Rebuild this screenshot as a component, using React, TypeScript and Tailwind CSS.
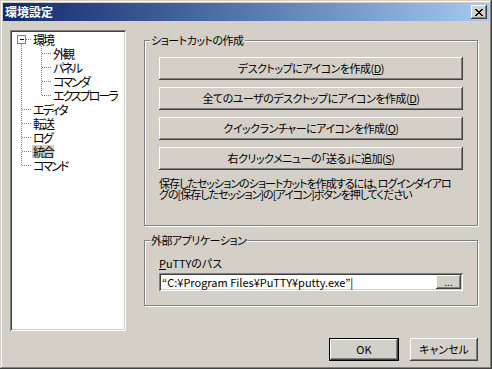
import React from "react";

const raised =
  "shadow-[inset_-1px_-1px_#404040,inset_1px_1px_#ffffff,inset_-2px_-2px_#808080,inset_2px_2px_#d4d0c8]";
const sunken =
  "shadow-[inset_1px_1px_#808080,inset_-1px_-1px_#ffffff,inset_2px_2px_#404040,inset_-2px_-2px_#d4d0c8]";

function Btn({ children, w, def }: { children: React.ReactNode; w: string; def?: boolean }) {
  if (def) {
    return (
      <div className={`${w} h-[23px] border border-black bg-[#d4d0c8]`}>
        <div className={`w-full h-full flex items-center justify-center ${raised}`}>{children}</div>
      </div>
    );
  }
  return (
    <div className={`${w} h-[23px] bg-[#d4d0c8] flex items-center justify-center ${raised}`}>{children}</div>
  );
}

function Group({ label, h, children }: { label: string; h: string; children: React.ReactNode }) {
  return (
    <div className={`relative w-[334px] ${h} border border-[#808080] shadow-[1px_1px_0_#ffffff,inset_1px_1px_0_#ffffff]`}>
      <div className="absolute left-[5px] top-[-7px] bg-[#d4d0c8] px-[1px] leading-[13px] tracking-[-0.5px] whitespace-nowrap">
        {label}
      </div>
      {children}
    </div>
  );
}

const treeRows: { text: string; child?: boolean; sel?: boolean }[] = [
  { text: "環境" },
  { text: "外観", child: true },
  { text: "パネル", child: true },
  { text: "コマンダ", child: true },
  { text: "エクスプローラ", child: true },
  { text: "エディタ" },
  { text: "転送" },
  { text: "ログ" },
  { text: "統合", sel: true },
  { text: "コマンド" },
];

function Tree() {
  const cy = (k: number) => 9 + 14 * k + 0.5;
  return (
    <div className={`relative w-[116px] h-[301px] bg-white ${sunken}`}>
      <svg className="absolute left-0 top-0" width="116" height="301" shapeRendering="crispEdges">
        <g stroke="#808080" strokeWidth="1" strokeDasharray="1 1" fill="none">
          <line x1="11.5" y1="14" x2="11.5" y2={cy(9) + 0.5} />
          <line x1="16" y1={cy(0)} x2="21" y2={cy(0)} />
          {[5, 6, 7, 8, 9].map((k) => (
            <line key={k} x1="12" y1={cy(k)} x2="21" y2={cy(k)} />
          ))}
          <line x1="31.5" y1="16" x2="31.5" y2={cy(4) + 0.5} />
          {[1, 2, 3, 4].map((k) => (
            <line key={k} x1="32" y1={cy(k)} x2="41" y2={cy(k)} />
          ))}
        </g>
        <rect x="7.5" y="5.5" width="8" height="8" fill="#ffffff" stroke="#808080" />
        <line x1="9.5" y1="9.5" x2="14" y2="9.5" stroke="#000000" />
      </svg>
      <div className="relative flex flex-col pt-[2px]">
        {treeRows.map((r, i) => (
          <div key={i} className={`h-[14px] flex items-center ${r.child ? "pl-[42px]" : "pl-[22px]"}`}>
            <span
              className={`px-[1px] text-[12px] leading-[13px] tracking-[-2px] whitespace-nowrap ${r.sel ? "bg-[#d4d0c8]" : ""}`}
            >
              {r.text}
            </span>
          </div>
        ))}
      </div>
    </div>
  );
}

export default function App() {
  return (
    <div
      className={`w-[492px] h-[369px] bg-[#d4d0c8] p-[3px] text-[11px] text-black [font-family:'Noto_Sans_CJK_JP',sans-serif] [font-feature-settings:'palt'] shadow-[inset_-1px_-1px_#404040,inset_1px_1px_#d4d0c8,inset_-2px_-2px_#808080,inset_2px_2px_#ffffff]`}
    >
      <div className="h-[18px] flex items-center justify-between bg-gradient-to-r from-[#12296c] to-[#a6caf0] pl-[2px] pr-[2px]">
        <span className="text-white font-bold text-[12px] leading-[18px]">環境設定</span>
        <div className={`w-[16px] h-[14px] bg-[#d4d0c8] flex items-center justify-center ${raised}`}>
          <svg width="8" height="7" viewBox="0 0 8 7" shapeRendering="crispEdges">
            <path
              d="M0 0h2v1h-2zM6 0h2v1h-2zM1 1h2v1h-2zM5 1h2v1h-2zM2 2h4v1h-4zM3 3h2v1h-2zM2 4h4v1h-4zM1 5h2v1h-2zM5 5h2v1h-2zM0 6h2v1h-2zM6 6h2v1h-2z"
              fill="#000"
            />
          </svg>
        </div>
      </div>
      <div className="flex items-start">
        <div className="ml-[7px] mt-[9px]">
          <Tree />
        </div>
        <div className="ml-[18px] mt-[19px] flex flex-col">
          <Group label="ショートカットの作成" h="h-[186px]">
            <div className="pl-[14px] pt-[16px] flex flex-col gap-[7px] tracking-[-0.5px]">
              <Btn w="w-[304px]">
                <span>デスクトップにアイコンを作成(<u>D</u>)</span>
              </Btn>
              <Btn w="w-[304px]">
                <span>全てのユーザのデスクトップにアイコンを作成(<u>D</u>)</span>
              </Btn>
              <Btn w="w-[304px]">
                <span>クイックランチャーにアイコンを作成(<u>Q</u>)</span>
              </Btn>
              <Btn w="w-[304px]">
                <span>右クリックメニューの「送る」に追加(<u>S</u>)</span>
              </Btn>
            </div>
            <div className="pl-[14px] mt-[8px] leading-[11px] tracking-[-1px] whitespace-nowrap">
              <div>保存したセッションのショートカットを作成するには、ログインダイアロ</div>
              <div>グの[保存したセッション]の[アイコン]ボタンを押してください</div>
            </div>
          </Group>
          <div className="mt-[14px]">
            <Group label="外部アプリケーション" h="h-[66px]">
              <div className="pl-[14px] pt-[16px] leading-[12px]">
                <u>P</u>uTTYのパス
              </div>
              <div
                className={`ml-[14px] mt-[4px] w-[304px] h-[18px] bg-white flex items-center justify-between pl-[3px] pr-[2px] ${sunken}`}
              >
                <span className="whitespace-nowrap leading-[14px]">“C:¥Program Files¥PuTTY¥putty.exe”|</span>
                <div
                  className={`w-[25px] h-[14px] bg-[#d4d0c8] flex items-center justify-center text-[10px] leading-[10px] ${raised}`}
                >
                  ...
                </div>
              </div>
            </Group>
          </div>
          <div className="mt-[32px] flex justify-end gap-[11px]">
            <Btn w="w-[70px]" def>
              <span>OK</span>
            </Btn>
            <Btn w="w-[68px]">
              <span>キャンセル</span>
            </Btn>
          </div>
        </div>
      </div>
    </div>
  );
}
